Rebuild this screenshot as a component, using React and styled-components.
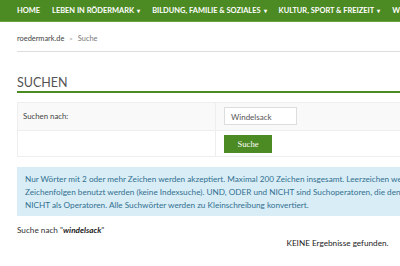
import React from 'react'
import styled, { createGlobalStyle } from 'styled-components'

const GlobalStyle = createGlobalStyle`
  html, body {
    margin: 0;
    padding: 0;
    overflow: hidden;
    background: #fff;
  }
  body {
    font-family: Lato, 'Open Sans', sans-serif;
    color: #333;
  }
`

const NavBar = styled.nav`
  display: flex;
  align-items: center;
  gap: 12px;
  height: 21px;
  padding-left: 17px;
  background: #4c8a23;
  border-bottom: 1px solid #6aa23c;
  white-space: nowrap;
  width: 700px;
`

const NavItem = styled.span`
  color: #fff;
  font-size: 7.45px;
  font-weight: 700;
  text-transform: uppercase;
`

const Caret = styled.span`
  font-size: 5.5px;
  margin-left: 3px;
`

const Page = styled.main`
  width: 641px;
  padding-left: 17px;
`

const Breadcrumb = styled.div`
  display: flex;
  align-items: center;
  gap: 5px;
  height: 26px;
  padding-top: 3px;
  border-bottom: 1px solid #ddd;
  font-size: 7.4px;
  color: #444;
`

const Sep = styled.span`
  font-size: 6px;
  color: #888;
`

const Current = styled.span`
  color: #777;
`

const Title = styled.h1`
  margin: 23px 0 0;
  padding-bottom: 1px;
  font-size: 12.5px;
  font-weight: 400;
  color: #555;
  border-bottom: 2px solid #4c8a23;
`

const FormTable = styled.div`
  margin-top: 9px;
  border: 1px solid #eee;
  display: grid;
  grid-template-columns: 197px 1fr;
`

const Cell = styled.div`
  background: ${p => (p.shaded ? '#f9f9f9' : '#fff')};
  border-left: ${p => (p.divider ? '1px solid #eee' : 'none')};
  border-top: ${p => (p.topline ? '1px solid #eee' : 'none')};
  padding: ${p => (p.label ? '8px 5px' : '4px 8px')};
  height: ${p => p.h}px;
  box-sizing: border-box;
  font-size: 7.8px;
  color: #444;
`

const TextInput = styled.div`
  width: 73px;
  height: 18px;
  box-sizing: border-box;
  border: 1px solid #ddd;
  background: #fff;
  padding: 4px 6px;
  font-size: 8px;
  color: #555;
`

const Button = styled.div`
  width: 48px;
  height: 18px;
  display: flex;
  align-items: center;
  justify-content: center;
  background: #4c8a23;
  color: #fff;
  font-family: 'Liberation Serif', serif;
  font-size: 8.6px;
`

const Notice = styled.div`
  margin-top: 10px;
  padding: 6px 8px 4px;
  background: #d9edf7;
  color: #31708f;
  font-size: 8.2px;
  line-height: 13px;
  white-space: nowrap;
  box-sizing: border-box;
`

const Line = styled.div``

const Query = styled.p`
  margin: 9px 0 0;
  font-size: 8.2px;
  color: #333;

  b {
    font-style: italic;
    color: #222;
  }
`

const Empty = styled.p`
  margin: 3px 0 0;
  text-align: center;
  font-size: 8.2px;
  color: #222;
`

const menu = [
  { label: 'Home' },
  { label: 'Leben in Rödermark', sub: true },
  { label: 'Bildung, Familie & Soziales', sub: true },
  { label: 'Kultur, Sport & Freizeit', sub: true },
  { label: 'Wirtschaft', sub: true },
]

const notice = [
  'Nur Wörter mit 2 oder mehr Zeichen werden akzeptiert. Maximal 200 Zeichen insgesamt. Leerzeichen werden zur Trennung verwendet.',
  'Zeichenfolgen benutzt werden (keine Indexsuche). UND, ODER und NICHT sind Suchoperatoren, die den standardmäßigen Operator überschreiben.',
  'NICHT als Operatoren. Alle Suchwörter werden zu Kleinschreibung konvertiert.',
]

export default function App() {
  return (
    <>
      <GlobalStyle />
      <NavBar>
        {menu.map(item => (
          <NavItem key={item.label}>
            {item.label}
            {item.sub && <Caret>▾</Caret>}
          </NavItem>
        ))}
      </NavBar>
      <Page>
        <Breadcrumb>
          <span>roedermark.de</span>
          <Sep>&gt;</Sep>
          <Current>Suche</Current>
        </Breadcrumb>

        <Title>SUCHEN</Title>

        <FormTable>
          <Cell shaded label h={27}>Suchen nach:</Cell>
          <Cell shaded divider h={27}>
            <TextInput>Windelsack</TextInput>
          </Cell>
          <Cell topline h={26} />
          <Cell topline divider h={26}>
            <Button>Suche</Button>
          </Cell>
        </FormTable>

        <Notice>
          {notice.map(line => (
            <Line key={line}>{line}</Line>
          ))}
        </Notice>

        <Query>
          Suche nach &quot;<b>windelsack</b>&quot;
        </Query>
        <Empty>KEINE Ergebnisse gefunden.</Empty>
      </Page>
    </>
  )
}
